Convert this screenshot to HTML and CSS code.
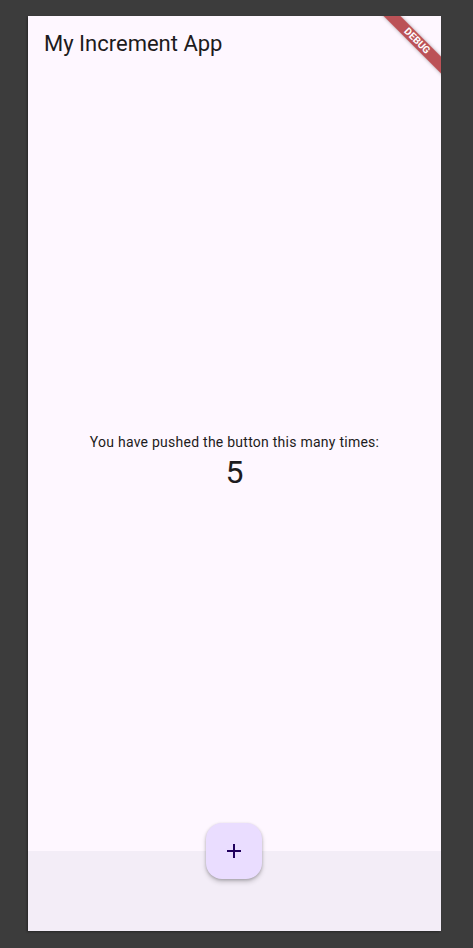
FILE: index.html
```html
<!DOCTYPE html>
<html>
<head>
<meta charset="utf-8">
<link rel="stylesheet" href="styles.css">
</head>
<body>
<div class="device">
  <header class="appbar"><h1 class="title">My Increment App</h1></header>
  <main class="content">
    <p class="label">You have pushed the button this many times:</p>
    <p class="count">5</p>
  </main>
  <footer class="bottombar"></footer>
  <button class="fab" aria-label="Increment">
    <svg width="24" height="24" viewBox="0 0 24 24"><path d="M19 13h-6v6h-2v-6H5v-2h6V5h2v6h6v2z" fill="#21005d"/></svg>
  </button>
  <div class="banner-clip"><div class="banner">DEBUG</div></div>
</div>
</body>
</html>
```
FILE: styles.css
```css
html, body { margin: 0; padding: 0; }
body {
  background: #3c3c3c;
  width: 473px;
  height: 948px;
  padding: 16px 0 0 28px;
  box-sizing: border-box;
  font-family: Roboto, "Noto Sans", sans-serif;
}
.device {
  position: relative;
  width: 413px;
  height: 915px;
  background: #fef7ff;
  display: flex;
  flex-direction: column;
  overflow: hidden;
  box-shadow: -1px 1px 2px rgba(0,0,0,0.35);
}
.appbar {
  height: 56px;
  display: flex;
  align-items: center;
  padding: 0 16px;
  flex: none;
}
.title {
  margin: 0;
  font-weight: 400;
  font-size: 22px;
  line-height: 28px;
  color: #1d1b20;
}
.content {
  flex: 1;
  display: flex;
  flex-direction: column;
  align-items: center;
  justify-content: center;
}
.label {
  margin: 0;
  font-size: 14px;
  line-height: 20px;
  letter-spacing: 0.25px;
  color: #1d1b20;
}
.count {
  margin: 0;
  font-size: 32px;
  line-height: 40px;
  color: #1d1b20;
}
.bottombar {
  height: 80px;
  flex: none;
  background: #f3edf7;
}
.fab {
  position: absolute;
  left: 178px;
  top: 807px;
  width: 56px;
  height: 56px;
  border: none;
  border-radius: 16px;
  background: #eaddff;
  display: flex;
  align-items: center;
  justify-content: center;
  padding: 0;
  box-shadow: 0 3px 5px rgba(0,0,0,0.18), 0 1px 3px rgba(0,0,0,0.2);
}
.banner-clip {
  position: absolute;
  top: 0;
  right: 0;
  width: 80px;
  height: 80px;
  overflow: hidden;
}
.banner {
  position: absolute;
  top: 18.5px;
  right: -26px;
  width: 100px;
  height: 12px;
  transform: rotate(45deg);
  background: rgba(168, 36, 40, 0.78);
  color: #fff;
  font-size: 10px;
  font-weight: 700;
  line-height: 12px;
  text-align: center;
  box-shadow: 0 0 4px rgba(0,0,0,0.3);
}
```
